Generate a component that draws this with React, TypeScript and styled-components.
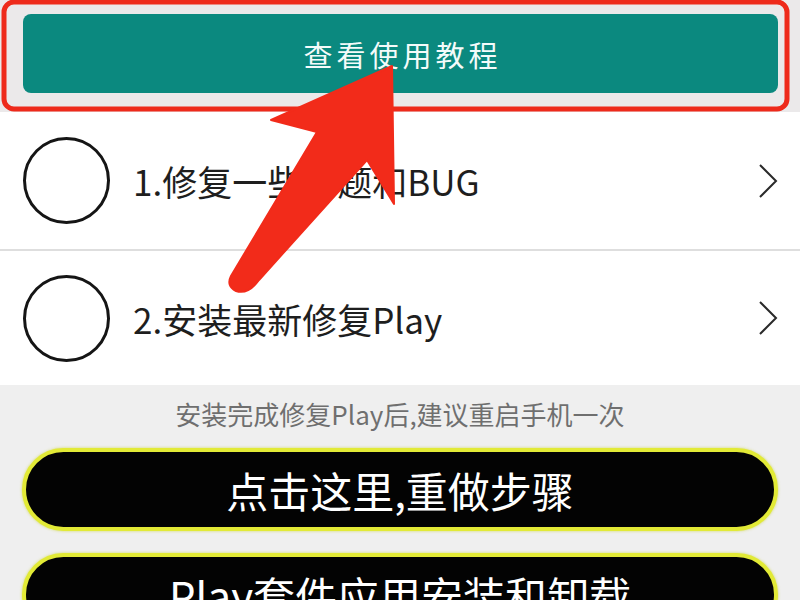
import styled, {createGlobalStyle} from 'styled-components';

const GlobalStyle = createGlobalStyle`
  html, body {
    margin: 0;
    padding: 0;
    background: #ffffff;
  }
  body {
    font-family: "Noto Sans CJK SC", "Noto Sans", sans-serif;
    overflow: hidden;
  }
`;

interface Step {
  id: number;
  text: string;
}

const steps: Step[] = [
  {id: 1, text: '1.修复一些问题和BUG'},
  {id: 2, text: '2.安装最新修复Play'},
];

const actions = ['点击这里,重做步骤', 'Play套件应用安装和卸载'];

const App = () => {
  return (
    <>
      <GlobalStyle />
      <Page>
        <Header>
          <TutorialButton>查看使用教程</TutorialButton>
        </Header>
        <StepList>
          {steps.map(step => (
            <StepRow key={step.id}>
              <StepCircle />
              <StepText>{step.text}</StepText>
              <Chevron viewBox="0 0 20 34">
                <polyline points="2,1 18,17 2,33" />
              </Chevron>
            </StepRow>
          ))}
        </StepList>
        <Footer>
          <Caption>安装完成修复Play后,建议重启手机一次</Caption>
          {actions.map(label => (
            <PillButton key={label}>{label}</PillButton>
          ))}
        </Footer>
        <Annotation viewBox="0 0 800 600">
          <rect
            x="4"
            y="2"
            width="783"
            height="107"
            rx="10"
            fill="none"
            stroke="#ee2a1b"
            strokeWidth="5"
          />
          <path
            d="M392 66 L394 204 L367 160 L259 280 Q248 295 236 291 Q226 286 231 276 L317 132 L271 120 Z"
            fill="#f22b1a"
            stroke="#f22b1a"
            strokeWidth="2"
            strokeLinejoin="round"
          />
        </Annotation>
      </Page>
    </>
  );
};

const Page = styled.div`
  position: relative;
  width: 800px;
  height: 600px;
  overflow: hidden;
  background: #ffffff;
  display: flex;
  flex-direction: column;
`;
const Header = styled.div`
  flex-shrink: 0;
  height: 112px;
  box-sizing: border-box;
  padding: 14px 22px 19px 23px;
  background: #ebe9ea;
  display: flex;
`;
const TutorialButton = styled.button`
  flex: 1;
  border: none;
  border-radius: 8px;
  background: #0b897f;
  color: #f4fbfa;
  font-family: "Noto Sans CJK SC", sans-serif;
  font-size: 29px;
  letter-spacing: 4px;
  padding: 0 0 0 4px;
  display: flex;
  justify-content: center;
  align-items: center;
`;
const StepList = styled.ul`
  flex-shrink: 0;
  margin: 0;
  padding: 0;
  list-style: none;
  background: #ffffff;
`;
const StepRow = styled.li`
  height: 137px;
  padding: 0 22px 0 23px;
  display: flex;
  align-items: center;
  & + & {
    border-top: 2px solid #dedede;
    height: 134px;
  }
`;
const StepCircle = styled.div`
  width: 81px;
  height: 81px;
  border: 3px solid #151515;
  border-radius: 50%;
  flex-shrink: 0;
`;
const StepText = styled.div`
  flex: 1;
  margin-left: 23px;
  font-size: 35px;
  color: #1e1e1e;
  line-height: 1;
`;
const Chevron = styled.svg`
  width: 20px;
  height: 34px;
  fill: none;
  stroke: #2a2a2a;
  stroke-width: 2;
`;
const Footer = styled.div`
  flex: 1 0 auto;
  background: #efefef;
  padding: 14px 22px 0 22px;
  display: flex;
  flex-direction: column;
  gap: 22px;
`;
const Caption = styled.div`
  text-align: center;
  font-size: 26px;
  line-height: 30px;
  color: #6f6f6f;
  margin-bottom: -3px;
`;
const PillButton = styled.button`
  flex-shrink: 0;
  height: 83px;
  border: 4px solid #e2ea36;
  border-radius: 42px;
  background: #030303;
  box-shadow: 0 0 3px rgba(200, 210, 40, 0.7);
  color: #ffffff;
  font-family: "Noto Sans CJK SC", sans-serif;
  font-size: 42px;
  display: flex;
  justify-content: center;
  align-items: center;
  padding: 0;
`;
const Annotation = styled.svg`
  position: absolute;
  left: 0;
  top: 0;
  width: 800px;
  height: 600px;
  pointer-events: none;
`;

export default App;
